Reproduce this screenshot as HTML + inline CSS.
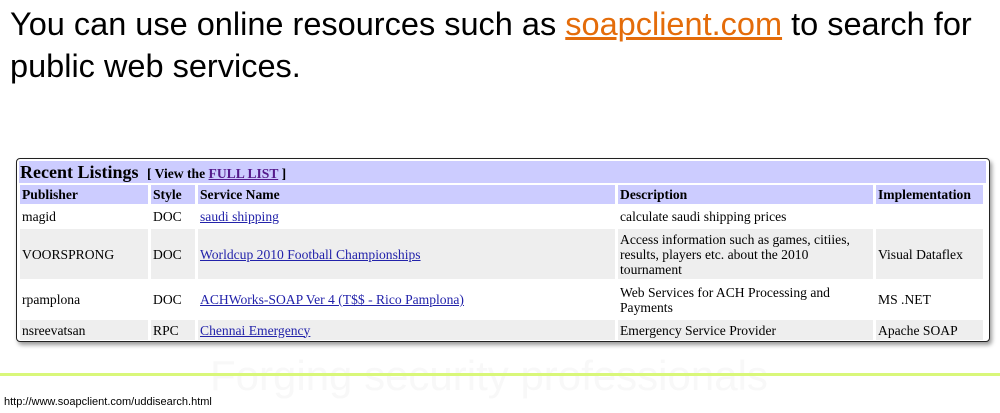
<!DOCTYPE html>
<html><head><style>
body{margin:0;width:1000px;height:413px;background:#fff;position:relative;overflow:hidden;font-family:"Liberation Sans",sans-serif}
.h{position:absolute;left:10px;top:3px;font-size:32.5px;line-height:42px;color:#000;white-space:nowrap}
.h a{color:#e46c0a;text-decoration:underline}
.wm{position:absolute;left:210px;top:352px;font-size:42px;color:#f8f8f8;white-space:nowrap}
.box{position:absolute;left:16px;top:158px;width:972px;height:182px;border:1px solid #222;border-radius:4px;box-shadow:2px 3px 4px rgba(0,0,0,.4);background:#fff;overflow:hidden;font-family:"Liberation Serif",serif;font-size:13.6px}
.t{position:absolute;left:2px;top:2px;width:967px;height:22px;background:#ccccff}
.t b.big{font-size:18px;position:absolute;left:1px;top:1px}
.t span{position:absolute;left:128px;top:5px;font-size:13.6px;font-weight:bold}
.t span a{color:#551a8b}
table{position:absolute;left:0px;top:25px;border-collapse:separate;border-spacing:3px 1px;width:969px}
td,th{padding:0 2px;text-align:left;vertical-align:middle;line-height:15px}
th{background:#ccccff;height:19px}
tr.g td{background:#eeeeee}
td a{color:#2222aa}
.gl{position:absolute;left:0;top:373px;width:1000px;height:3px;background:#d9f77a}
.url{position:absolute;left:4px;top:396px;font-size:11px;color:#000}
</style></head><body>
<div class="wm">Forging security professionals</div>
<div class="h">You can use online resources such as <a>soapclient.com</a> to search for<br>public web services.</div>
<div class="box">
<div class="t"><b class="big">Recent Listings</b><span>[ View the <a><u>FULL LIST</u></a> ]</span></div>
<table>
<tr><th style="width:124px">Publisher</th><th style="width:40px">Style</th><th style="width:413px">Service Name</th><th style="width:251px">Description</th><th>Implementation</th></tr>
<tr style="height:23px"><td>magid</td><td>DOC</td><td><a><u>saudi shipping</u></a></td><td>calculate saudi shipping prices</td><td></td></tr>
<tr class="g" style="height:50px"><td>VOORSPRONG</td><td>DOC</td><td><a><u>Worldcup 2010 Football Championships</u></a></td><td>Access information such as games, citiies,<br>results, players etc. about the 2010<br>tournament</td><td>Visual Dataflex</td></tr>
<tr style="height:39px"><td>rpamplona</td><td>DOC</td><td><a><u>ACHWorks-SOAP Ver 4 (T$$ - Rico Pamplona)</u></a></td><td>Web Services for ACH Processing and<br>Payments</td><td>MS .NET</td></tr>
<tr class="g" style="height:20px"><td>nsreevatsan</td><td>RPC</td><td><a><u>Chennai Emergency</u></a></td><td>Emergency Service Provider</td><td>Apache SOAP</td></tr>
</table>
</div>
<div class="gl"></div>
<div class="url">http://www.soapclient.com/uddisearch.html</div>
</body></html>
